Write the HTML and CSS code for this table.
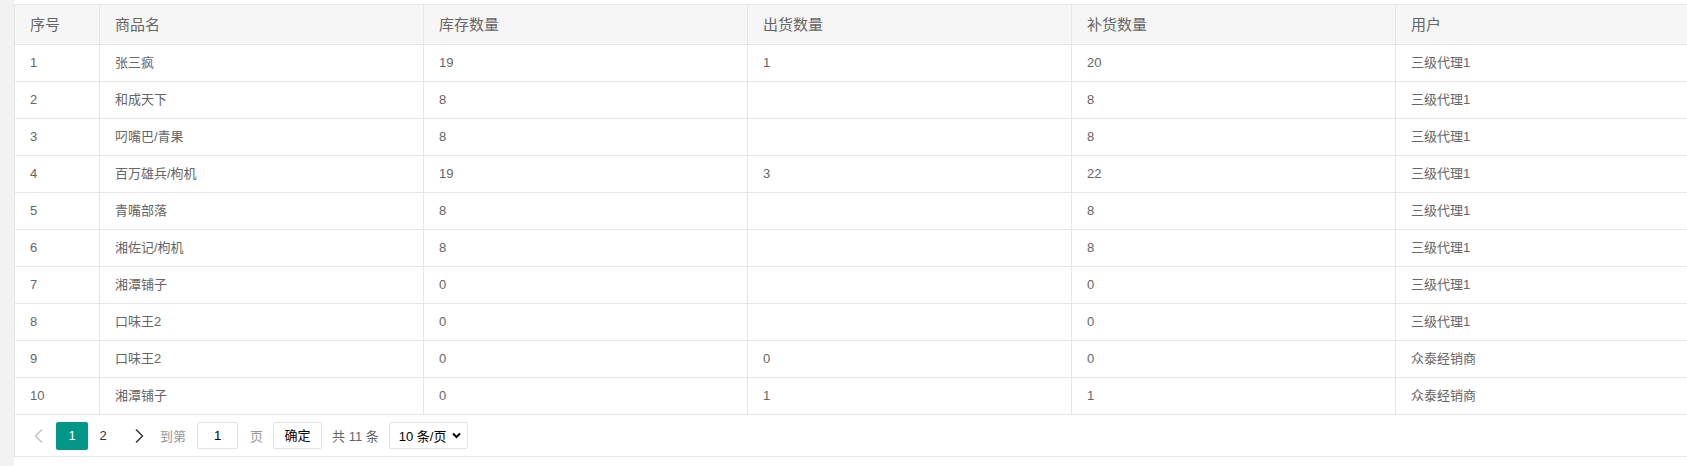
FILE: index.html
```html
<!doctype html>
<html lang="zh">
  <head>
    <meta charset="UTF-8" />
    <meta name="viewport" content="width=device-width, initial-scale=1.0" />
    <title>库存统计</title>
    <link rel="stylesheet" href="styles.css">
  </head>
  <body>
    <div class="layout">
      <div class="side"></div>

      <div class="main">
        <!-- Table -->
        <div class="table">
          <div class="row head">
            <div class="cell">序号</div>
            <div class="cell">商品名</div>
            <div class="cell">库存数量</div>
            <div class="cell">出货数量</div>
            <div class="cell">补货数量</div>
            <div class="cell">用户</div>
          </div>
          <div class="row">
            <div class="cell">1</div><div class="cell">张三疯</div><div class="cell">19</div>
            <div class="cell">1</div><div class="cell">20</div><div class="cell">三级代理1</div>
          </div>
          <div class="row">
            <div class="cell">2</div><div class="cell">和成天下</div><div class="cell">8</div>
            <div class="cell"></div><div class="cell">8</div><div class="cell">三级代理1</div>
          </div>
          <div class="row">
            <div class="cell">3</div><div class="cell">叼嘴巴/青果</div><div class="cell">8</div>
            <div class="cell"></div><div class="cell">8</div><div class="cell">三级代理1</div>
          </div>
          <div class="row">
            <div class="cell">4</div><div class="cell">百万雄兵/枸机</div><div class="cell">19</div>
            <div class="cell">3</div><div class="cell">22</div><div class="cell">三级代理1</div>
          </div>
          <div class="row">
            <div class="cell">5</div><div class="cell">青嘴部落</div><div class="cell">8</div>
            <div class="cell"></div><div class="cell">8</div><div class="cell">三级代理1</div>
          </div>
          <div class="row">
            <div class="cell">6</div><div class="cell">湘佐记/枸机</div><div class="cell">8</div>
            <div class="cell"></div><div class="cell">8</div><div class="cell">三级代理1</div>
          </div>
          <div class="row">
            <div class="cell">7</div><div class="cell">湘潭铺子</div><div class="cell">0</div>
            <div class="cell"></div><div class="cell">0</div><div class="cell">三级代理1</div>
          </div>
          <div class="row">
            <div class="cell">8</div><div class="cell">口味王2</div><div class="cell">0</div>
            <div class="cell"></div><div class="cell">0</div><div class="cell">三级代理1</div>
          </div>
          <div class="row">
            <div class="cell">9</div><div class="cell">口味王2</div><div class="cell">0</div>
            <div class="cell">0</div><div class="cell">0</div><div class="cell">众泰经销商</div>
          </div>
          <div class="row">
            <div class="cell">10</div><div class="cell">湘潭铺子</div><div class="cell">0</div>
            <div class="cell">1</div><div class="cell">1</div><div class="cell">众泰经销商</div>
          </div>
        </div>

        <!-- Pagination -->
        <div class="pager">
          <span class="arrow prev">
            <svg width="9" height="14" viewBox="0 0 9 14"><polyline points="8,0.5 1.5,7 8,13.5" fill="none" stroke="#c2c2c2" stroke-width="1.4"/></svg>
          </span>
          <span class="page-num current">1</span>
          <span class="page-num">2</span>
          <span class="arrow next">
            <svg width="9" height="14" viewBox="0 0 9 14"><polyline points="1,0.5 7.5,7 1,13.5" fill="none" stroke="#333" stroke-width="1.4"/></svg>
          </span>
          <span class="label skip">到第</span>
          <span class="skip-input">1</span>
          <span class="label page-unit">页</span>
          <span class="btn">确定</span>
          <span class="count">共 11 条</span>
          <span class="limit">
            10 条/页
            <svg width="9" height="7" viewBox="0 0 9 7"><polyline points="1,1.5 4.5,5 8,1.5" fill="none" stroke="#000" stroke-width="2"/></svg>
          </span>
        </div>
      </div>
    </div>
  </body>
</html>
```

FILE: styles.css
```css
* {
  margin: 0;
  padding: 0;
  box-sizing: border-box;
}

body {
  font-family: "Liberation Sans", "Noto Sans CJK SC", sans-serif;
  background: #fff;
  color: #666;
  overflow: hidden;
}

.layout {
  display: flex;
  min-height: 100vh;
}

.side {
  width: 14px;
  flex-shrink: 0;
  background: #f2f2f2;
}

.main {
  flex: 1;
  min-width: 0;
  padding-top: 4px;
  overflow: hidden;
}

/* table */

.table {
  width: 1705px;
  border-top: 1px solid #e6e6e6;
}

.row {
  display: grid;
  grid-template-columns: 85px repeat(5, 324px);
  height: 37px;
}

.row.head {
  height: 40px;
  background: #f6f6f6;
}

.cell {
  border-left: 1px solid #e6e6e6;
  border-bottom: 1px solid #e6e6e6;
  padding: 0 15px;
  font-size: 13px;
  line-height: 36px;
  white-space: nowrap;
}

.head .cell {
  font-size: 15px;
  line-height: 39px;
}

/* pagination */

.pager {
  display: flex;
  align-items: center;
  height: 42px;
  border-left: 1px solid #e6e6e6;
  border-bottom: 1px solid #e6e6e6;
  font-size: 13px;
}

.arrow {
  display: flex;
  align-items: center;
  justify-content: center;
  width: 24px;
  height: 28px;
}

.prev {
  margin-left: 11px;
}

.next {
  margin-left: 9px;
}

.page-num {
  height: 28px;
  line-height: 28px;
  width: 30px;
  text-align: center;
  color: #333;
}

.page-num.current {
  width: 32px;
  margin-left: 6px;
  background: #009688;
  color: #fff;
  border-radius: 2px;
}

.label {
  color: #999;
}

.skip {
  margin-left: 9px;
}

.skip-input {
  margin-left: 11px;
  width: 41px;
  height: 27px;
  line-height: 25px;
  border: 1px solid #e2e2e2;
  border-radius: 2px;
  text-align: center;
  color: #000;
}

.page-unit {
  margin-left: 12px;
}

.btn {
  margin-left: 10px;
  width: 49px;
  height: 27px;
  line-height: 25px;
  border: 1px solid #e2e2e2;
  border-radius: 2px;
  text-align: center;
  color: #000;
}

.count {
  margin-left: 10px;
  color: #666;
}

.limit {
  margin-left: 10px;
  display: flex;
  align-items: center;
  justify-content: space-between;
  width: 79px;
  height: 27px;
  padding: 0 6px 0 9px;
  border: 1px solid #e2e2e2;
  border-radius: 2px;
  color: #000;
}
```
